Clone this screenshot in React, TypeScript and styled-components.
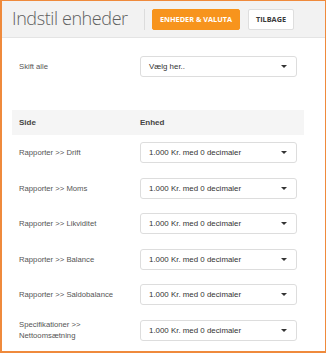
import React from 'react'
import styled, { createGlobalStyle } from 'styled-components'

const GlobalStyle = createGlobalStyle`
  html, body {
    margin: 0;
    padding: 0;
    background: #ffffff;
  }
  * {
    box-sizing: border-box;
  }
`

const Frame = styled.div`
  width: 326px;
  height: 353px;
  border-style: solid;
  border-color: #ef8a3c;
  border-width: 1px 1px 2px 2px;
  background: #ffffff;
  font-family: 'Liberation Sans', Arial, sans-serif;
  overflow: hidden;
`

const Header = styled.div`
  height: 37px;
  background: #f2f2f2;
  border-bottom: 1px solid #e4e4e4;
  display: flex;
  align-items: center;
  padding: 0 0 0 10px;
  white-space: nowrap;
`

const Title = styled.h1`
  margin: 0;
  flex-shrink: 0;
  width: 118px;
  font-family: 'Open Sans', sans-serif;
  font-weight: 300;
  font-size: 18px;
  letter-spacing: -0.4px;
  color: #5f5f5f;
  line-height: 1;
  padding-bottom: 2px;
`

const Divider = styled.div`
  flex-shrink: 0;
  width: 1px;
  height: 21px;
  background: #dcdcdc;
  margin: 0 7px 0 14px;
`

const Button = styled.button<{ $primary?: boolean }>`
  flex-shrink: 0;
  height: 21px;
  margin-right: 8px;
  padding: 0 7px;
  border-radius: 2px;
  font-family: 'Open Sans', sans-serif;
  font-weight: 700;
  font-size: 7.3px;
  white-space: nowrap;
  text-transform: uppercase;
  cursor: pointer;
  border: 1px solid ${p => (p.$primary ? '#f7941d' : '#dedede')};
  background: ${p => (p.$primary ? '#f7941d' : '#ffffff')};
  color: ${p => (p.$primary ? '#ffffff' : '#3a3a3a')};
`

const Body = styled.div`
  padding: 18px 21px 0 10px;
`

const Row = styled.div`
  display: flex;
  align-items: center;
  height: 35.5px;
  padding-left: 7px;
`

const TopRow = styled(Row)`
  height: 21px;
  margin-bottom: 33px;
`

const Label = styled.div`
  flex-shrink: 0;
  width: 121px;
  padding-right: 10px;
  font-size: 7.7px;
  line-height: 11px;
  color: #555555;
`

const SelectBox = styled.div`
  flex-shrink: 0;
  width: 157px;
  height: 21px;
  border: 1px solid #dddddd;
  border-radius: 3px;
  background: #ffffff;
  display: flex;
  align-items: center;
  justify-content: space-between;
  padding: 0 9px 0 8px;
  font-size: 7.9px;
  color: #333333;
  white-space: nowrap;
`

const Caret = styled.span`
  width: 0;
  height: 0;
  border-left: 3px solid transparent;
  border-right: 3px solid transparent;
  border-top: 3px solid #333333;
`

const TableHead = styled.div`
  display: flex;
  align-items: center;
  height: 25px;
  background: #f5f5f5;
  padding-left: 7px;
`

const HeadCell = styled.div<{ $w?: number }>`
  width: ${p => (p.$w ? `${p.$w}px` : 'auto')};
  font-size: 8px;
  font-weight: 700;
  color: #444444;
`

const Select: React.FC<{ value: string }> = ({ value }) => (
  <SelectBox>
    <span>{value}</span>
    <Caret />
  </SelectBox>
)

const pages = [
  'Rapporter >> Drift',
  'Rapporter >> Moms',
  'Rapporter >> Likviditet',
  'Rapporter >> Balance',
  'Rapporter >> Saldobalance',
  'Specifikationer >> Nettoomsætning',
]

const App: React.FC = () => {
  return (
    <>
      <GlobalStyle />
      <Frame>
        <Header>
          <Title>Indstil enheder</Title>
          <Divider />
          <Button $primary>Enheder &amp; Valuta</Button>
          <Button>Tilbage</Button>
        </Header>
        <Body>
          <TopRow>
            <Label>Skift alle</Label>
            <Select value="Vælg her.." />
          </TopRow>
          <TableHead>
            <HeadCell $w={121}>Side</HeadCell>
            <HeadCell>Enhed</HeadCell>
          </TableHead>
          {pages.map(page => (
            <Row key={page}>
              <Label>{page}</Label>
              <Select value="1.000 Kr. med 0 decimaler" />
            </Row>
          ))}
        </Body>
      </Frame>
    </>
  )
}

export default App
